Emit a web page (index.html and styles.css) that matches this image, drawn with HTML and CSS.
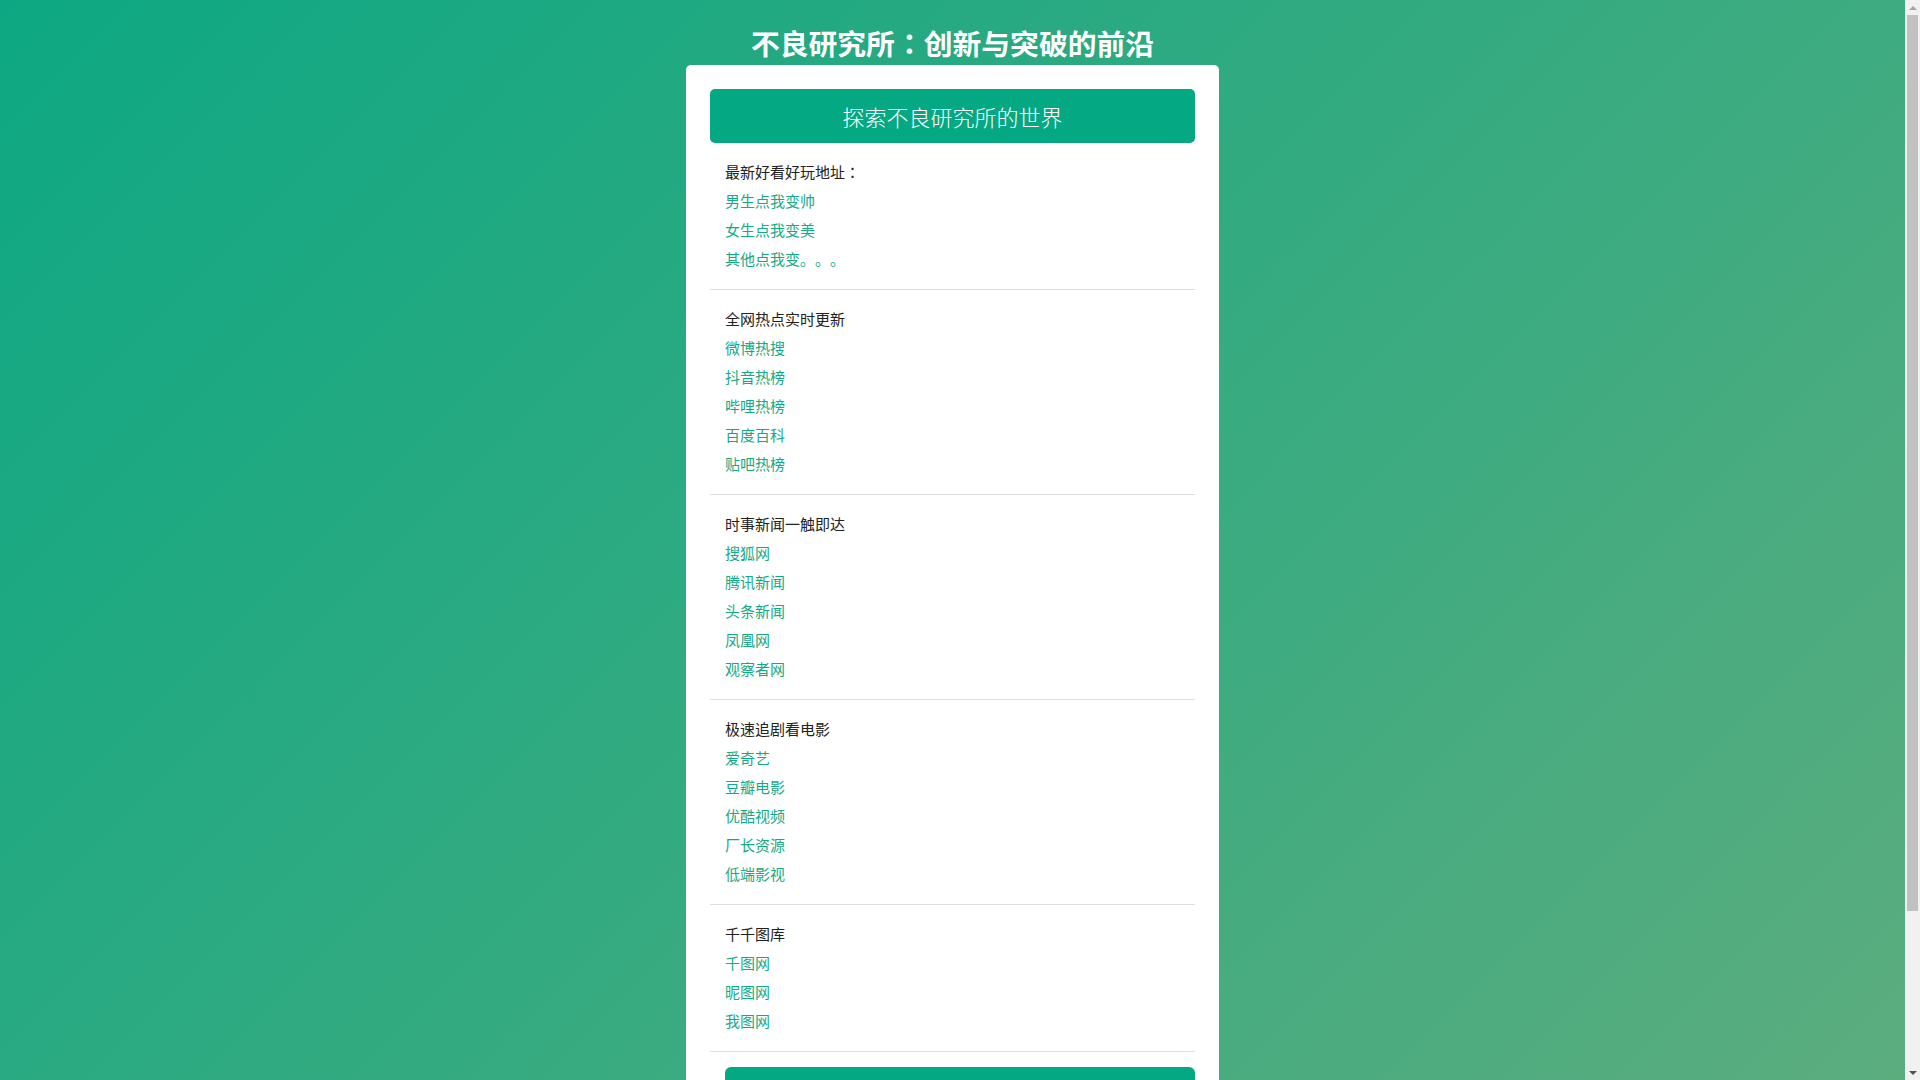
FILE: index.html
```html
<!DOCTYPE html>
<html lang="zh-CN">
<head>
<meta charset="utf-8">
<title>不良研究所：创新与突破的前沿</title>
<link rel="stylesheet" href="styles.css">
</head>
<body>
<h1 class="page-title">不良研究所<span class="colon" lang="ja">：</span>创新与突破的前沿</h1>
<main class="card">
  <h2 class="card-header">探索不良研究所的世界</h2>

  <section class="section">
    <p class="section-title">最新好看好玩地址<span class="colon" lang="ja">：</span></p>
    <ul class="links">
      <li><a href="#">男生点我变帅</a></li>
      <li><a href="#">女生点我变美</a></li>
      <li><a href="#">其他点我变。。。</a></li>
    </ul>
  </section>

  <section class="section">
    <p class="section-title">全网热点实时更新</p>
    <ul class="links">
      <li><a href="#">微博热搜</a></li>
      <li><a href="#">抖音热榜</a></li>
      <li><a href="#">哔哩热榜</a></li>
      <li><a href="#">百度百科</a></li>
      <li><a href="#">贴吧热榜</a></li>
    </ul>
  </section>

  <section class="section">
    <p class="section-title">时事新闻一触即达</p>
    <ul class="links">
      <li><a href="#">搜狐网</a></li>
      <li><a href="#">腾讯新闻</a></li>
      <li><a href="#">头条新闻</a></li>
      <li><a href="#">凤凰网</a></li>
      <li><a href="#">观察者网</a></li>
    </ul>
  </section>

  <section class="section">
    <p class="section-title">极速追剧看电影</p>
    <ul class="links">
      <li><a href="#">爱奇艺</a></li>
      <li><a href="#">豆瓣电影</a></li>
      <li><a href="#">优酷视频</a></li>
      <li><a href="#">厂长资源</a></li>
      <li><a href="#">低端影视</a></li>
    </ul>
  </section>

  <section class="section">
    <p class="section-title">千千图库</p>
    <ul class="links">
      <li><a href="#">千图网</a></li>
      <li><a href="#">昵图网</a></li>
      <li><a href="#">我图网</a></li>
    </ul>
  </section>

  <div class="footer-box"></div>
</main>

<div class="scrollbar" aria-hidden="true">
  <span class="sb-arrow sb-up"></span>
  <span class="sb-track"><span class="sb-thumb"></span></span>
  <span class="sb-arrow sb-down"></span>
</div>
</body>
</html>
```

FILE: styles.css
```css
html {
  background: linear-gradient(135deg, #0da883 0%, #5fad7e 100%);
  min-height: 100%;
}

body {
  margin: 0;
  padding: 23px 15px 60px 0;
  font-family: "Noto Sans CJK SC", "Noto Sans", sans-serif;
  font-size: 15px;
  color: #222;
  text-spacing-trim: space-all;
}

.page-title {
  margin: 0 0 2px;
  font-family: "Noto Sans CJK SC", sans-serif;
  font-size: 28.8px;
  line-height: 40px;
  font-weight: 700;
  color: #fff;
  text-align: center;
}

.colon {
  font-family: "Noto Sans CJK JP", "Noto Sans CJK SC", sans-serif;
}

.card {
  box-sizing: border-box;
  width: 533px;
  margin: 0 auto;
  padding: 24px 24px 24px;
  background: #fff;
  border-radius: 5px;
}

.card-header {
  margin: 0;
  height: 54px;
  line-height: 54px;
  background: #04a882;
  color: #fff;
  border-radius: 5px;
  text-align: center;
  font-size: 22px;
  font-weight: 300;
}

.section {
  padding: 15px 15px;
  border-bottom: 1px solid #dedede;
}

.section-title {
  margin: 0;
  line-height: 27px;
  padding-bottom: 2px;
  color: #222;
}

.links {
  list-style: none;
  margin: 0;
  padding: 0;
}

.links li {
  line-height: 27px;
  padding-bottom: 2px;
}

.links a {
  color: #15aa86;
  text-decoration: none;
}

.footer-box {
  margin: 15px 0 0 15px;
  height: 60px;
  background: #04a882;
  border-radius: 6px;
}

/* classic scrollbar drawn over the right edge */
.scrollbar {
  position: fixed;
  top: 0;
  right: 0;
  bottom: 0;
  width: 15px;
  background: #f1f1f1;
  display: flex;
  flex-direction: column;
}

.sb-arrow {
  height: 15px;
  flex: none;
  display: flex;
  align-items: center;
  justify-content: center;
}

.sb-up::before,
.sb-down::before {
  content: "";
  width: 0;
  height: 0;
  border-left: 4px solid transparent;
  border-right: 4px solid transparent;
}

.sb-up::before {
  border-bottom: 4px solid #a3a3a3;
}

.sb-down::before {
  border-top: 4px solid #505050;
}

.sb-track {
  flex: 1;
  padding: 0 2px;
}

.sb-thumb {
  display: block;
  height: 896px;
  background: #c1c1c1;
}
```
